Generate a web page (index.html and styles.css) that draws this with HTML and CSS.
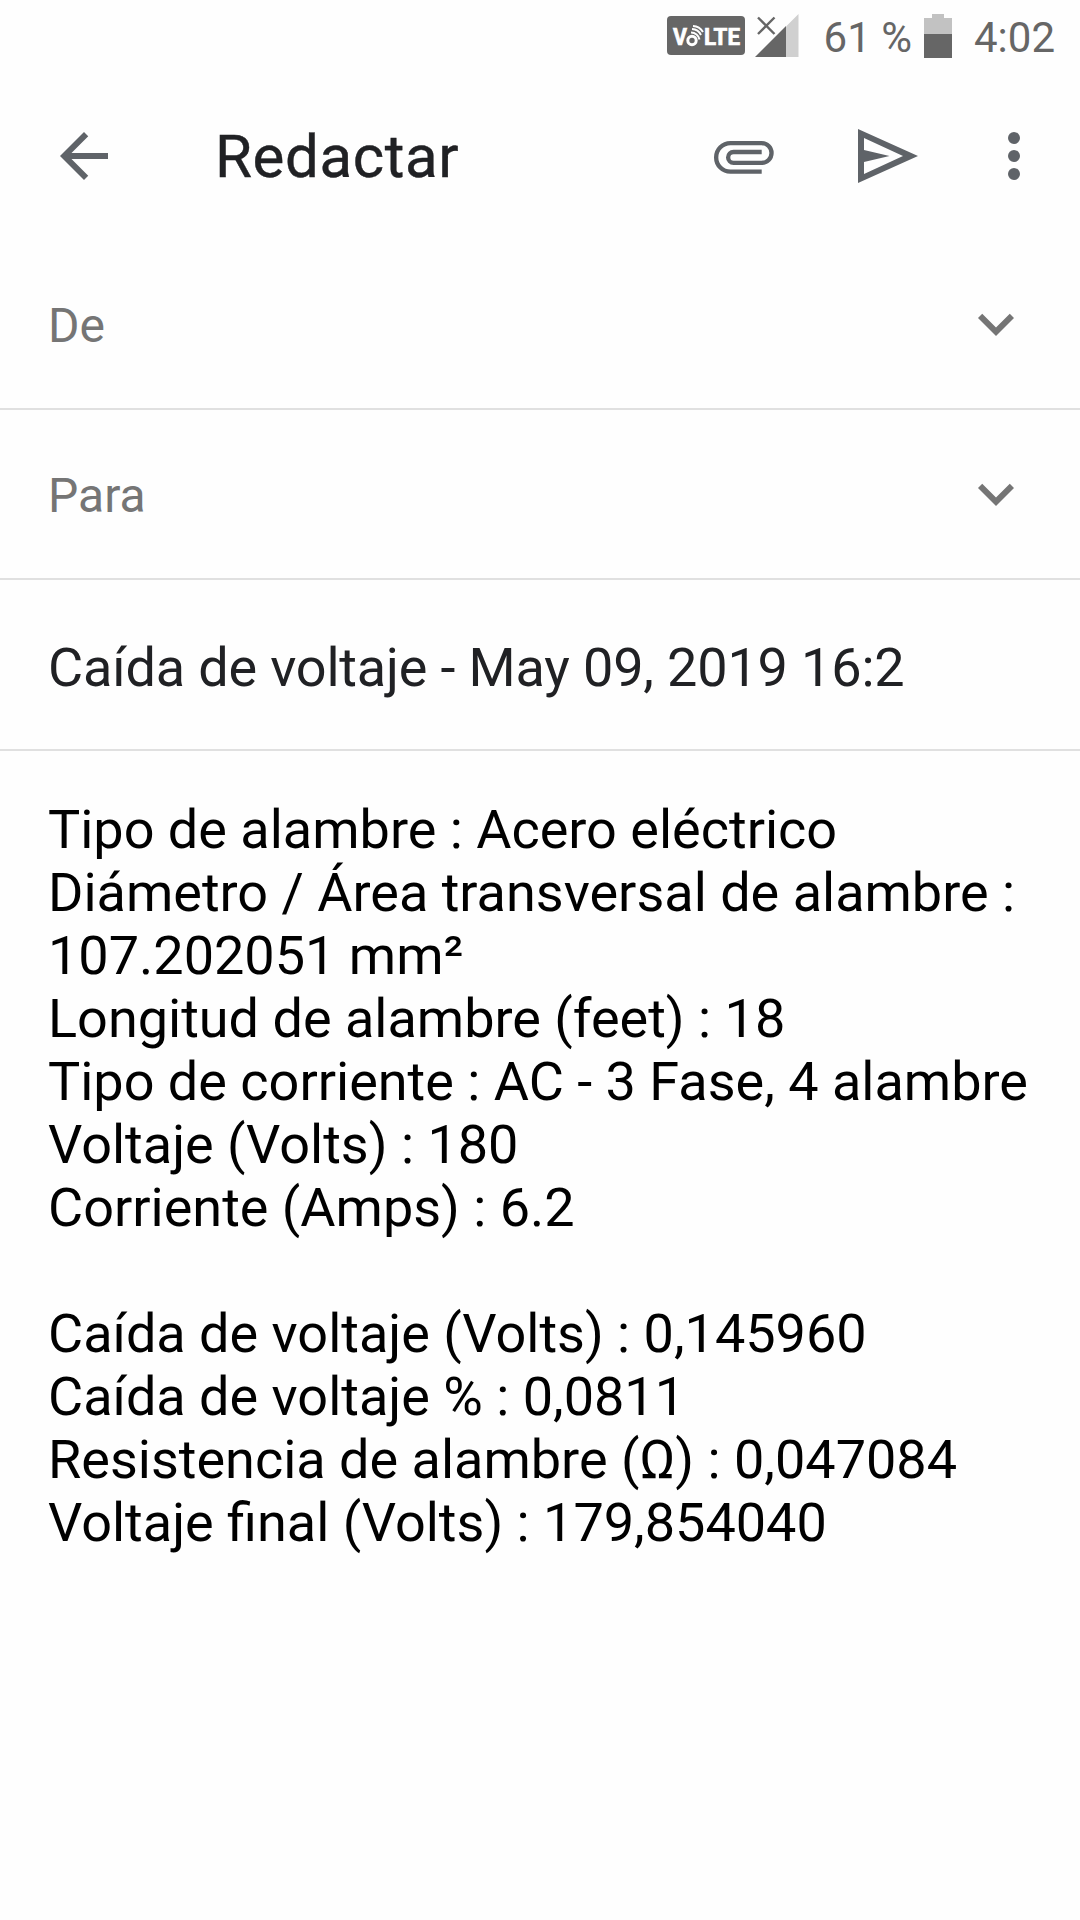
FILE: index.html
```html
<!DOCTYPE html>
<html lang="es">
<head>
    <meta charset="UTF-8">
    <meta name="viewport" content="width=device-width, initial-scale=1.0">
    <title>Redactar</title>
    <link rel="stylesheet" href="styles.css">
</head>
<body>

<div class="status-bar">
    <svg class="volte" width="78" height="39" viewBox="0 0 78 39">
        <rect width="78" height="39" rx="4" fill="#666"/>
        <g fill="#fff" stroke="#fff" stroke-width="0.7" font-family="Roboto, sans-serif" font-weight="700" font-size="23">
            <text x="6" y="29" textLength="14" lengthAdjust="spacingAndGlyphs">V</text>
            <text x="37" y="29" textLength="36" lengthAdjust="spacingAndGlyphs">LTE</text>
        </g>
        <g fill="none" stroke="#fff">
            <circle cx="25" cy="24.5" r="4.2" stroke-width="3"/>
            <path d="M24 16.5a8.5 8.5 0 0 1 8.5 7" stroke-width="2"/>
            <path d="M25 13a10.5 10.5 0 0 1 9 6" stroke-width="2"/>
            <path d="M26 10a12.5 12.5 0 0 1 10 6" stroke-width="2"/>
        </g>
    </svg>
    <svg class="signal" width="44" height="44" viewBox="0 0 44 44">
        <path d="M31 12.5 43.5 0V43H31z" fill="#d0d0d0"/>
        <path d="M0 43 31 12v31z" fill="#666"/>
        <path d="M3 3.5 19.5 20M19.5 3.5 3 20" stroke="#666" stroke-width="2.4"/>
    </svg>
    <span class="percent">61 %</span>
    <svg class="battery" width="28" height="44" viewBox="0 0 28 44">
        <path d="M8 0h12v4h8v16H0V4h8z" fill="#c2c2c2"/>
        <path d="M0 20h28v24H0z" fill="#666"/>
    </svg>
    <span class="clock">4:02</span>
</div>

<header class="toolbar">
    <svg class="icon back" viewBox="0 0 24 24"><path d="M20 11H7.83l5.59-5.59L12 4l-8 8 8 8 1.41-1.41L7.83 13H20z"/></svg>
    <h1>Redactar</h1>
    <svg class="icon attach" viewBox="0 0 24 24"><path d="M17.9 17.22H7.47a4.75 4.75 0 0 1 0-9.5H17.9a3.28 3.28 0 0 1 0 6.56H8.52a1.8 1.8 0 0 1 0-3.61H17.9"/></svg>
    <svg class="icon send" viewBox="0 0 24 24"><path fill-rule="evenodd" d="M2 3v18l20-9zM4 6l13 6-13 6v-4l8.5-2L4 10z"/></svg>
    <svg class="icon more" viewBox="0 0 24 24"><circle cx="12" cy="6" r="2"/><circle cx="12" cy="12" r="2"/><circle cx="12" cy="18" r="2"/></svg>
</header>

<div class="row">
    <label>De</label>
    <svg class="icon chevron" viewBox="0 0 24 24"><path d="M16.59 8.59 12 13.17 7.41 8.59 6 10l6 6 6-6z"/></svg>
</div>
<div class="row">
    <label>Para</label>
    <svg class="icon chevron" viewBox="0 0 24 24"><path d="M16.59 8.59 12 13.17 7.41 8.59 6 10l6 6 6-6z"/></svg>
</div>
<div class="row subject">Caída de voltaje - May 09, 2019 16:2</div>

<div class="message">
    Tipo de alambre : Acero eléctrico<br>
    Diámetro / Área transversal de alambre :<br>
    107.202051 mm²<br>
    Longitud de alambre (feet) : 18<br>
    Tipo de corriente : AC - 3 Fase, 4 alambre<br>
    Voltaje (Volts) : 180<br>
    Corriente (Amps) : 6.2<br>
    <br>
    Caída de voltaje (Volts) : 0,145960<br>
    Caída de voltaje % : 0,0811<br>
    Resistencia de alambre (Ω) : 0,047084<br>
    Voltaje final (Volts) : 179,854040
</div>

</body>
</html>
```
FILE: styles.css
```css
body {
    font-family: Roboto, sans-serif;
    background: #fefefe;
    margin: 0;
    min-height: 100vh;
}

.status-bar {
    display: flex;
    align-items: flex-start;
    justify-content: flex-end;
    height: 72px;
    padding-right: 25px;
    box-sizing: border-box;
    color: #666;
    font-size: 42px;
    line-height: 76px;
}

.volte {
    margin: 16px 10px 0 0;
}

.signal {
    margin: 14px 25px 0 0;
}

.battery {
    margin: 14px 22px 0 12px;
}

.toolbar {
    display: flex;
    align-items: center;
    height: 168px;
    padding: 0 30px 0 48px;
}

.toolbar h1 {
    flex: 1;
    margin: 0 0 0 95px;
    color: #202124;
    font-size: 60px;
    font-weight: 400;
    letter-spacing: 0.6px;
    -webkit-text-stroke: 0.4px #202124;
}

.icon {
    width: 72px;
    height: 72px;
    fill: #5f6368;
}

.attach {
    margin-right: 72px;
}

.attach path {
    fill: none;
    stroke: #5f6368;
    stroke-width: 1.45;
}

.send {
    margin-right: 54px;
}

.row {
    display: flex;
    align-items: center;
    justify-content: space-between;
    height: 168px;
    padding: 0 48px;
    border-bottom: 2px solid #e0e0e0;
}

.row label {
    padding-top: 3px;
    color: #757575;
    font-size: 48px;
}

.chevron {
    fill: #757575;
}

.subject {
    height: 163px;
    padding-top: 6px;
    color: #202124;
    font-size: 54px;
    letter-spacing: -0.16px;
}

.message {
    padding: 47px 40px 0 48px;
    color: #000;
    font-size: 54px;
    line-height: 63px;
    white-space: nowrap;
}
```
